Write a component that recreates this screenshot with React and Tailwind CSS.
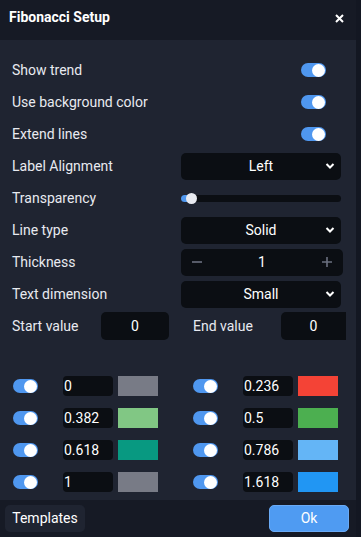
import React from 'react';

const Toggle = () => (
  <div className="w-[25px] h-[14px] rounded-full bg-[#4f97ef] flex items-center justify-end pr-[1px]">
    <div className="w-[13px] h-[13px] rounded-full bg-white" />
  </div>
);

const Chevron = () => (
  <svg width="10" height="7" viewBox="0 0 10 7" className="absolute right-[6px] top-1/2 -translate-y-1/2">
    <path d="M1.5 1.5 L5 5 L8.5 1.5" stroke="white" strokeWidth="2" fill="none" />
  </svg>
);

const Select = ({ value }) => (
  <div className="relative w-[160px] h-[27px] rounded-[5px] bg-[#0b0e13] flex items-center justify-center text-[14px] text-white">
    {value}
    <Chevron />
  </div>
);

const Row = ({ label, children }) => (
  <div className="h-8 flex items-center">
    <div className="w-[169px] text-[14px] text-[#e8eaf0]">{label}</div>
    {children}
  </div>
);

const levels = [
  ['0', '#787b86', '0.236', '#f44336'],
  ['0.382', '#81c784', '0.5', '#4caf50'],
  ['0.618', '#089981', '0.786', '#64b5f6'],
  ['1', '#787b86', '1.618', '#2196f3'],
];

const Level = ({ value, color }) => (
  <div className="flex items-center w-[180px]">
    <div className="ml-[13px]"><Toggle /></div>
    <div className="ml-[25px] w-[50px] h-[20px] rounded-[4px] bg-[#0b0e13] text-[14px] text-white flex items-center pl-[1px]">
      {value}
    </div>
    <div className="ml-[5px] w-[40px] h-[20px]" style={{ backgroundColor: color }} />
  </div>
);

export default function App() {
  return (
    <div className="w-[361px] h-[537px] flex bg-[#131722] overflow-hidden" style={{ fontFamily: 'Roboto, "Liberation Sans", sans-serif' }}>
      <div className="w-[356px] h-full flex flex-col">
        {/* Header */}
        <div className="h-10 bg-[#161a25] flex items-center justify-between pl-[9px] pr-[12px] pb-[6px]">
          <div className="text-[14px] font-bold text-white">Fibonacci Setup</div>
          <svg width="9" height="9" viewBox="0 0 9 9" className="mt-[2px]">
            <path d="M1 1 L8 8 M8 1 L1 8" stroke="white" strokeWidth="2" />
          </svg>
        </div>

        {/* Body */}
        <div className="flex-1 bg-[#1f2431] flex overflow-hidden">
          <div className="flex-1 pl-3 pt-[14px]">
            <Row label="Show trend"><div className="ml-[120px]"><Toggle /></div></Row>
            <Row label="Use background color"><div className="ml-[120px]"><Toggle /></div></Row>
            <Row label="Extend lines"><div className="ml-[120px]"><Toggle /></div></Row>
            <Row label="Label Alignment"><Select value="Left" /></Row>
            <Row label="Transparency">
              <div className="relative w-[160px] h-[7px] rounded-full bg-[#0b0e13]">
                <div className="absolute left-0 top-0 h-[7px] w-[12px] rounded-full bg-[#4f97ef]" />
                <div className="absolute left-[5px] -top-[2px] w-[11px] h-[11px] rounded-full bg-[#e8eaf0]" />
              </div>
            </Row>
            <Row label="Line type"><Select value="Solid" /></Row>
            <Row label="Thickness">
              <div className="w-[162px] h-[27px] rounded-[5px] bg-[#0b0e13] flex items-center justify-between px-[11px] text-[14px] text-white">
                <svg width="10" height="10" viewBox="0 0 10 10"><path d="M0 5 H10" stroke="#6b7080" strokeWidth="1.6" /></svg>
                <span>1</span>
                <svg width="10" height="10" viewBox="0 0 10 10"><path d="M0 5 H10 M5 0 V10" stroke="#6b7080" strokeWidth="1.6" /></svg>
              </div>
            </Row>
            <Row label="Text dimension"><Select value="Small" /></Row>
            <div className="h-8 flex items-center">
              <div className="w-[89px] text-[14px] text-[#e8eaf0]">Start value</div>
              <div className="w-[68px] h-[28px] rounded-[5px] bg-[#0b0e13] flex items-center justify-center text-[14px] text-white">0</div>
              <div className="ml-[24px] w-[88px] text-[14px] text-[#e8eaf0]">End value</div>
              <div className="w-[65px] h-[28px] rounded-l-[5px] bg-[#0b0e13] flex items-center justify-center text-[14px] text-white">0</div>
            </div>

            <div className="mt-[28px] -ml-3">
              {levels.map((l, i) => (
                <div key={i} className="h-8 flex items-center">
                  <Level value={l[0]} color={l[1]} />
                  <Level value={l[2]} color={l[3]} />
                </div>
              ))}
            </div>
          </div>

          {/* Scrollbar */}
          <div className="w-[10px] flex flex-col items-center pr-[2px]">
            <svg width="6" height="4" viewBox="0 0 6 4" className="mt-[3px]"><path d="M0 4 L3 0 L6 4 Z" fill="#3d4353" /></svg>
            <div className="mt-[3px] w-[7px] h-[303px] bg-[#363c4b]" />
          </div>
        </div>

        {/* Footer */}
        <div className="h-[37px] bg-[#161a25] flex items-center justify-between pl-[5px] pr-[7px]">
          <div className="w-[80px] h-[27px] rounded-[5px] bg-[#1f2431] flex items-center justify-center text-[14px] text-white">Templates</div>
          <div className="w-[80px] h-[27px] rounded-[5px] bg-[#4f9bf2] border border-[#6aaaf5] flex items-center justify-center text-[14px] text-white">Ok</div>
        </div>
      </div>
      <div className="flex-1 bg-[#131722]" />
    </div>
  );
}
